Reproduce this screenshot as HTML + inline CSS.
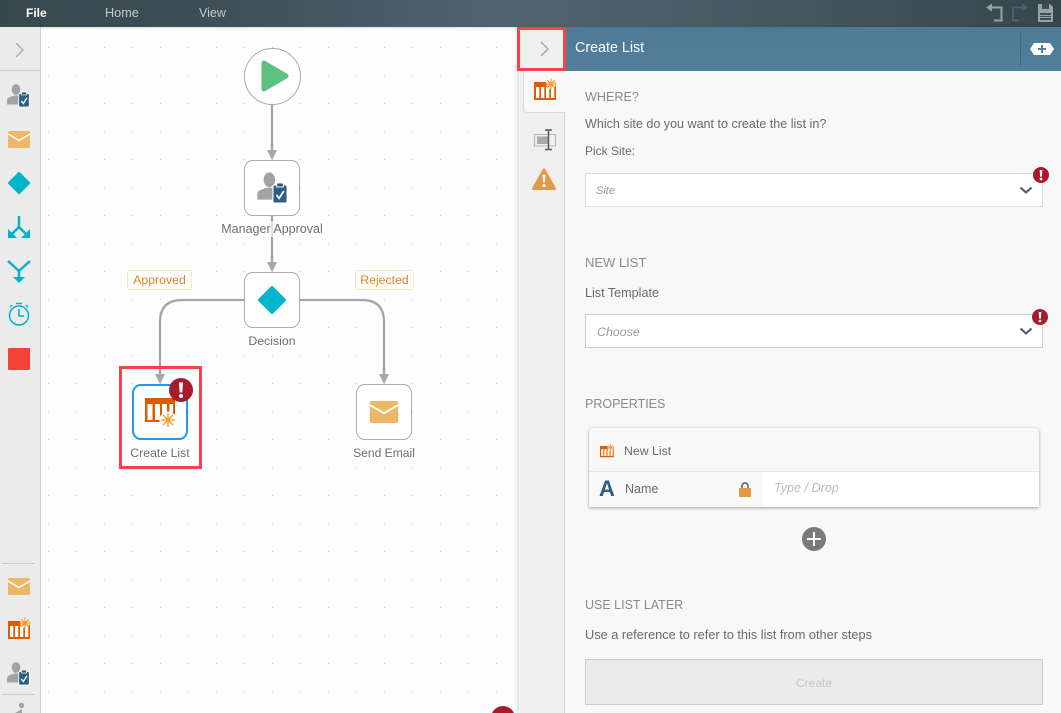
<!DOCTYPE html>
<html><head><meta charset="utf-8">
<style>
*{box-sizing:border-box}
html,body{margin:0;padding:0;width:1061px;height:713px;overflow:hidden;background:#fff}
body{font-family:"Liberation Sans",sans-serif;position:relative;color:#666}
.a{position:absolute}
.t{position:absolute;white-space:nowrap;line-height:16px}
.h{font-size:12.7px;color:#8a8a8a}
.p{font-size:12.5px;color:#6a6a6a}
.l{font-size:12.3px;color:#6b6f73;text-align:center}
.node{position:absolute;width:56px;height:56px;background:#fff;border:1px solid #aaa;border-radius:9px}
.sel{position:absolute;left:585px;width:458px;height:34px;background:#fff;border:1px solid #ddd}
svg{position:absolute;overflow:visible}
</style></head><body>
<svg width="0" height="0" style="position:absolute"><defs>
<symbol id="appr" viewBox="0 0 24 24" overflow="visible">
<ellipse cx="10" cy="6.500" rx="4.300" ry="5.500" fill="#a3a3a3"/><path d="M1 21.500v-4q0-2.500 3-3.500l4-1.500h5v9z" fill="#a3a3a3"/>
<rect x="12.700" y="10.500" width="10.600" height="13.500" rx="1.500" fill="#2f5f80" stroke="#fff" stroke-width=".8"/><rect x="15.500" y="9" width="5" height="3" fill="#2f5f80" stroke="#fff" stroke-width=".7"/>
<path d="M15.300 18l2 2.500 3.600-5.500" fill="none" stroke="#fff" stroke-width="1.300"/></symbol>
<symbol id="mail" viewBox="0 0 22 17"><rect width="22" height="17" rx="1.500" fill="#ecb766"/><path d="M0 3l11 6.500L22 3" fill="none" stroke="#fff" stroke-width="1.500"/></symbol>
<symbol id="list" viewBox="0 0 24 20" overflow="visible"><rect x="0" y="2" width="22" height="18" fill="#e05a00"/><rect x="2" y="7" width="3.300" height="11" fill="#fff"/><rect x="7" y="7" width="3.300" height="11" fill="#fff"/><rect x="12" y="7" width="3.300" height="11" fill="#fff"/><rect x="17" y="7" width="3.300" height="11" fill="#fff"/>
<circle cx="17" cy="4" r="5" fill="#fff" opacity=".8"/><path d="M17-1.500v11M11.500 4h11M13.200.2l7.600 7.600M20.800.2L13.200 7.800" stroke="#f8941d" stroke-width="1.100"/></symbol>
<symbol id="err" viewBox="0 0 24 24"><circle cx="12" cy="12" r="12" fill="#a81b2c"/><path d="M10 4.500h4L13.300 14.500h-2.600z" fill="#fff"/><circle cx="12" cy="18" r="2" fill="#fff"/></symbol>
</defs></svg>

<!-- Top bar -->
<div class="a" style="left:0;top:0;width:1061px;height:27px;background:linear-gradient(90deg,#37474e 0,#3f5058 22%,#516570 48%,#45575f 75%,#36464d 100%)"></div>
<div class="t" style="left:26px;top:5px;font-size:12px;font-weight:bold;color:#fff">File</div>
<div class="t" style="left:105px;top:5px;font-size:12.700px;color:#c4cbce">Home</div>
<div class="t" style="left:199px;top:5px;font-size:12.500px;color:#c4cbce">View</div>
<svg style="left:985px;top:3px" width="72" height="18"><path d="M3 4.500h13.500v13H9" fill="none" stroke="#98a2a6" stroke-width="2"/><path d="M1 4.500l6-4v8z" fill="#98a2a6"/><path d="M41 4.500H28v13h6" fill="none" stroke="#4f6068" stroke-width="2"/><path d="M43 4.500l-6-4v8z" fill="#4f6068"/><path d="M53 1h12l3 3v15H53z" fill="#98a2a6"/><rect x="57" y="1" width="7" height="5" fill="#3c4c53"/><rect x="55" y="10" width="11" height="7" fill="#3c4c53"/><path d="M55 12.500h11M55 14.500h11" stroke="#98a2a6"/></svg>

<!-- Left sidebar -->
<div class="a" style="left:0;top:27px;width:41px;height:686px;background:#ebebeb;border-right:1px solid #d2d2d2;box-shadow:1px 0 2px rgba(0,0,0,.08)"></div>
<div class="a" style="left:0;top:70px;width:40px;height:1px;background:#ccc"></div>
<svg style="left:15px;top:42px" width="10" height="16"><path d="M1 1l7 7-7 7" fill="none" stroke="#b0b0b0" stroke-width="1.500"/></svg>
<svg style="left:6px;top:83px" width="24" height="24"><use href="#appr" width="24" height="24"/></svg>
<svg style="left:8px;top:131px" width="22" height="17"><use href="#mail" width="22" height="17"/></svg>
<svg style="left:7px;top:171px" width="24" height="24"><path d="M12 1.500L22.500 12 12 22.500 1.500 12z" fill="#00b4cc" stroke="#00b4cc" stroke-width="1.500" stroke-linejoin="round"/></svg>
<svg style="left:7px;top:215px" width="24" height="26"><path d="M12 1v11L5 19M12 12l7 7" fill="none" stroke="#00b4cc" stroke-width="2.500"/><path d="M1 14v9h9zM23 14v9h-9z" fill="#00b4cc"/></svg>
<svg style="left:7px;top:259px" width="24" height="26"><path d="M1 2l11 10v7M23 2L12 12" fill="none" stroke="#00b4cc" stroke-width="2.500"/><path d="M6 18h12l-6 6z" fill="#00b4cc"/></svg>
<svg style="left:8px;top:302px" width="22" height="26"><circle cx="11" cy="13.500" r="9.500" fill="none" stroke="#00b4cc" stroke-width="1.500"/><path d="M11 7v7h5M8 1.500h6M2 5l2-2M20 5l-2-2" fill="none" stroke="#00b4cc" stroke-width="1.500"/></svg>
<div class="a" style="left:8px;top:348px;width:22px;height:22px;background:#f44336;border-radius:1px"></div>
<div class="a" style="left:2px;top:563px;width:33px;height:1px;background:#ccc"></div>
<svg style="left:8px;top:578px" width="22" height="17"><use href="#mail" width="22" height="17"/></svg>
<svg style="left:8px;top:619px" width="24" height="20"><use href="#list" width="24" height="20"/></svg>
<svg style="left:6px;top:661px" width="24" height="24"><use href="#appr" width="24" height="24"/></svg>
<div class="a" style="left:2px;top:694px;width:33px;height:1px;background:#ccc"></div>
<svg style="left:8px;top:702px" width="24" height="11"><circle cx="13.500" cy="3.500" r="2.700" fill="#a3a3a3"/><path d="M7 11l7-4v4z" fill="#a3a3a3"/></svg>

<!-- Canvas -->
<div class="a" style="left:41px;top:27px;width:478px;height:686px;background-color:#fdfdfd;background-image:radial-gradient(circle at .5px .5px,#cdcdcd .7px,transparent .7px);background-size:28px 28px;background-position:7px 20px"></div>
<div class="a" style="left:41px;top:27px;width:478px;height:3px;background:linear-gradient(#e4e4e4,transparent)"></div>

<svg style="left:41px;top:27px" width="478" height="686" viewBox="41 27 478 686">
<g fill="none" stroke="#a5a5a5" stroke-width="2.300">
<path d="M272 104v50M272 216v50"/>
<path d="M244 300h-62q-22 0-22 22v54"/>
<path d="M300 300h62q22 0 22 22v54"/>
</g>
<g fill="#a5a5a5">
<path d="M267 150h10l-5 10zM267 262h10l-5 10zM155 374h10l-5 10zM379 374h10l-5 10z"/>
</g>
</svg>

<div class="a" style="left:244px;top:48px;width:57px;height:57px;border:1px solid #aaa;border-radius:50%;background:#fff"></div>
<svg style="left:260px;top:59px" width="30" height="34"><path d="M4 4L26 17 4 30z" fill="#5cc281" stroke="#5cc281" stroke-width="5" stroke-linejoin="round"/></svg>

<div class="node" style="left:244px;top:160px"></div>
<svg style="left:256px;top:171px" width="32" height="32"><use href="#appr" width="32" height="32"/></svg>
<div class="a" style="left:220px;top:221px;width:104px;height:16px;background:rgba(253,253,253,.7)"></div>
<div class="t l" style="left:212px;top:221px;width:120px;font-size:12.500px">Manager Approval</div>

<div class="node" style="left:244px;top:272px"></div>
<svg style="left:257px;top:285px" width="30" height="30"><path d="M15 1.500L28.500 15 15 28.500 1.500 15z" fill="#00b4cc" stroke="#00b4cc" stroke-width="1.500" stroke-linejoin="round"/></svg>
<div class="t l" style="left:212px;top:333px;width:120px">Decision</div>

<div class="a" style="left:127px;top:270px;width:65px;height:20px;background:#fffdfa;border:1px solid #fde3bf;border-radius:3px;font-size:12.300px;line-height:18px;text-align:center;color:#d98a2b">Approved</div>
<div class="a" style="left:355px;top:270px;width:59px;height:20px;background:#fffdfa;border:1px solid #fde3bf;border-radius:3px;font-size:12.300px;line-height:18px;text-align:center;color:#d98a2b">Rejected</div>

<div class="node" style="left:132px;top:384px;border:2px solid #2196f3"></div>
<svg style="left:145px;top:394px" width="32" height="34" viewBox="0 0 32 34"><rect x="0" y="4" width="30" height="24" fill="#e05a00"/><rect x="2.500" y="10" width="5" height="16" fill="#fff"/><rect x="10" y="10" width="5" height="16" fill="#fff"/><rect x="17" y="10" width="5" height="16" fill="#fff"/><rect x="24.500" y="10" width="3.500" height="16" fill="#fff"/><circle cx="23" cy="26" r="8.500" fill="#fff"/><path d="M23 19v14M16 26h14M18 21l10 10M28 21L18 31" stroke="#f8941d" stroke-width="1.300"/></svg>
<svg style="left:169px;top:378px" width="24" height="24"><use href="#err" width="24" height="24"/></svg>
<div class="t l" style="left:100px;top:445px;width:120px">Create List</div>
<div class="a" style="left:119px;top:366px;width:83px;height:103px;border:3px solid #f4444a"></div>

<div class="node" style="left:356px;top:384px"></div>
<svg style="left:369px;top:401px" width="30" height="22"><use href="#mail" width="30" height="22"/></svg>
<div class="t l" style="left:324px;top:445px;width:120px;font-size:12.100px">Send Email</div>

<div class="a" style="left:491px;top:706px;width:24px;height:24px;border-radius:50%;background:#a81b2c"></div>

<!-- Right panel -->
<div class="a" style="left:519px;top:27px;width:542px;height:686px;background:#f8f8f8;box-shadow:-2px 0 3px rgba(0,0,0,.12)"></div>
<div class="a" style="left:520px;top:71px;width:45px;height:642px;background:#efefef;border-right:1px solid #d4d4d4"></div>
<div class="a" style="left:523px;top:71px;width:43px;height:42px;background:#f8f8f8;border-left:1px solid #dcdcdc;border-bottom:1px solid #dcdcdc;border-bottom-left-radius:4px"></div>
<div class="a" style="left:519px;top:27px;width:47px;height:44px;background:#efefef"></div>
<div class="a" style="left:565px;top:27px;width:496px;height:44px;background:linear-gradient(#4f7a95,#537f9a)"></div>
<div class="t" style="left:575px;top:40px;font-size:14.300px;color:#fff">Create List</div>
<div class="a" style="left:1020px;top:32px;width:1px;height:34px;background:#3f6a85"></div>
<svg style="left:1030px;top:43px" width="24" height="12"><path d="M4 0h16l4 6-4 6H4L0 6z" fill="#fff"/><path d="M12 2v8M8 6h8" stroke="#527d98" stroke-width="2"/></svg>
<svg style="left:540px;top:41px" width="10" height="16"><path d="M1 1l7 7-7 7" fill="none" stroke="#a8a8a8" stroke-width="1.500"/></svg>
<div class="a" style="left:517px;top:27px;width:49px;height:44px;border:3px solid #f4444a"></div>

<svg style="left:534px;top:80px" width="24" height="22"><use href="#list" width="24" height="20"/></svg>
<svg style="left:534px;top:129px" width="23" height="21"><rect x=".5" y="5.500" width="21" height="11.500" fill="none" stroke="#b4b4b4" stroke-width="1"/><rect x="3" y="7.500" width="11" height="7.500" fill="#a8a8a8"/><path d="M11 1h7M11 20.500h7M14.500 1v19.500" stroke="#4f5d64" stroke-width="1.500" fill="none"/></svg>
<svg style="left:532px;top:167px" width="24" height="24"><path d="M12 3L22.500 21.500H1.500z" fill="#e19a45" stroke="#e19a45" stroke-width="3" stroke-linejoin="round"/><path d="M10.500 7.500h3l-.6 8h-1.800z" fill="#fff"/><circle cx="12" cy="18.500" r="1.500" fill="#fff"/></svg>

<div class="t h" style="left:585px;top:89px;font-size:12.600px">WHERE?</div>
<div class="t p" style="left:585px;top:116px;font-size:12.550px">Which site do you want to create the list in?</div>
<div class="t p" style="left:585px;top:143px;font-size:12px">Pick Site:</div>
<div class="sel" style="top:173px"></div>
<div class="t" style="left:596px;top:183px;font-size:11px;font-style:italic;color:#999">Site</div>
<svg style="left:1019px;top:186px" width="14" height="9"><path d="M1.500 1.500L7 6.500l5.500-5" fill="none" stroke="#4d5a66" stroke-width="2"/></svg>
<svg style="left:1033px;top:167px" width="16" height="16"><use href="#err" width="16" height="16"/></svg>

<div class="t h" style="left:585px;top:255px;font-size:13px">NEW LIST</div>
<div class="t p" style="left:585px;top:285px;font-size:12.600px">List Template</div>
<div class="sel" style="top:314px;border-color:#ccc"></div>
<div class="t" style="left:597px;top:324px;font-size:12.400px;font-style:italic;color:#999">Choose</div>
<svg style="left:1019px;top:327px" width="14" height="9"><path d="M1.500 1.500L7 6.500l5.500-5" fill="none" stroke="#4d5a66" stroke-width="2"/></svg>
<svg style="left:1032px;top:309px" width="16" height="16"><use href="#err" width="16" height="16"/></svg>

<div class="t h" style="left:585px;top:396px;font-size:12.500px">PROPERTIES</div>
<div class="a" style="left:589px;top:428px;width:450px;height:79px;background:#f8f8f8;border-radius:4px 4px 2px 2px;box-shadow:0 1px 3px rgba(0,0,0,.35)"></div>
<div class="a" style="left:589px;top:471px;width:450px;height:1px;background:#e6e6e6"></div>
<div class="a" style="left:763px;top:472px;width:276px;height:35px;background:#fff"></div>
<svg style="left:600px;top:444px" width="15" height="14"><use href="#list" width="15" height="14"/></svg>
<div class="t p" style="left:624px;top:443px;font-size:12.300px">New List</div>
<div class="t" style="left:599px;top:478px;font-size:22px;line-height:22px;font-weight:bold;color:#2f5f80">A</div>
<div class="t p" style="left:625px;top:481px">Name</div>
<svg style="left:739px;top:482px" width="12" height="15"><path d="M3 6V4a3 3 0 0 1 6 0v2" fill="none" stroke="#4d5a60" stroke-width="1.500"/><rect y="6" width="12" height="9" rx="1" fill="#e19a45"/></svg>
<div class="t" style="left:774px;top:480px;font-size:12.600px;font-style:italic;color:#bbb">Type / Drop</div>
<svg style="left:802px;top:527px" width="24" height="24"><circle cx="12" cy="12" r="12" fill="#7a7a7a"/><path d="M12 5v14M5 12h14" stroke="#fff" stroke-width="2"/></svg>

<div class="t h" style="left:585px;top:597px;font-size:12.500px">USE LIST LATER</div>
<div class="t p" style="left:585px;top:627px;font-size:12.750px">Use a reference to refer to this list from other steps</div>
<div class="a" style="left:585px;top:659px;width:458px;height:46px;background:#ebebeb;border:1px solid #ccc;text-align:center;font-size:12px;line-height:46px;color:#c8c8c8">Create</div>
</body></html>
